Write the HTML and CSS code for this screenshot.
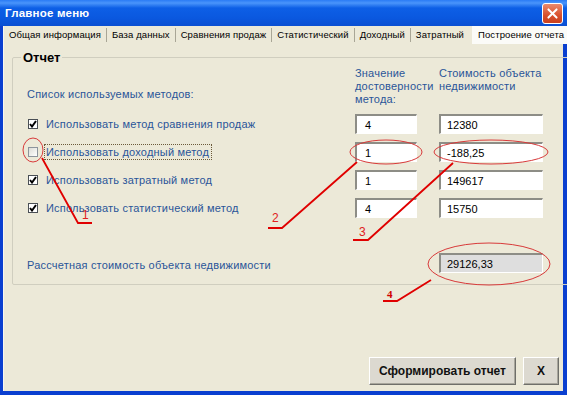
FILE: index.html
```html
<!DOCTYPE html>
<html lang="ru">
<head>
  <meta charset="UTF-8">
  <title>Главное меню</title>
  <link rel="stylesheet" href="styles.css">
</head>
<body>

<div class="window">
  <div class="titlebar">
    <span class="title">Главное меню</span>
    <span class="close">
      <svg width="21" height="21" viewBox="0 0 21 21">
        <path d="M6 6 L15 15 M15 6 L6 15" stroke="#fff" stroke-width="2.2" stroke-linecap="round"/>
      </svg>
    </span>
  </div>

  <div class="client">
    <div class="tabs">
      <span class="tab">Общая информация</span>
      <span class="tab">База данных</span>
      <span class="tab">Сравнения продаж</span>
      <span class="tab">Статистический</span>
      <span class="tab">Доходный</span>
      <span class="tab last">Затратный</span>
      <span class="tab active">Построение отчета</span>
    </div>

    <div class="panel">
      <fieldset class="report">
        <legend>Отчет</legend>
        <div class="grid">
          <div class="list-title">Список используемых методов:</div>
          <div class="head">Значение<br>достоверности<br>метода:</div>
          <div class="head">Стоимость объекта<br>недвижимости</div>

          <label class="method"><span class="cb checked"></span><span>Использовать метод сравнения продаж</span></label>
          <div class="field small">4</div>
          <div class="field">12380</div>

          <label class="method"><span class="cb"></span><span class="focus">Использовать доходный метод</span></label>
          <div class="field small">1</div>
          <div class="field">-188,25</div>

          <label class="method"><span class="cb checked"></span><span>Использовать затратный метод</span></label>
          <div class="field small">1</div>
          <div class="field">149617</div>

          <label class="method"><span class="cb checked"></span><span>Использовать статистический метод</span></label>
          <div class="field small">4</div>
          <div class="field">15750</div>

          <div class="total-label total">Рассчетная стоимость объекта недвижимости</div>
          <div class="total"></div>
          <div class="field readonly total">29126,33</div>
        </div>
      </fieldset>

      <div class="actions">
        <button class="btn">Сформировать отчет</button>
        <button class="btn btn-x">X</button>
      </div>
    </div>
  </div>

  <!-- red notes drawn over the form -->
  <svg class="marks" width="567" height="395" viewBox="0 0 567 395">
    <g fill="none" stroke="#d83a3a" stroke-width="1">
      <ellipse cx="33" cy="150" rx="10" ry="12"/>
      <ellipse cx="386" cy="152" rx="36" ry="12"/>
      <ellipse cx="491" cy="152" rx="57" ry="12"/>
      <ellipse cx="489" cy="264" rx="61" ry="21"/>
    </g>
    <g fill="none" stroke="#e00000" stroke-width="1.8">
      <polyline points="42,158 78,223 92,223"/>
      <polyline points="357,162 282,228 268,228"/>
      <polyline points="453,163 368,240 353,240"/>
      <polyline points="431,280 397,301 383,301"/>
    </g>
    <g fill="#e02020" font-family="Liberation Sans, sans-serif" font-size="12">
      <text x="82" y="219">1</text>
      <text x="272" y="222">2</text>
      <text x="359" y="236">3</text>
    </g>
    <text x="387" y="298" fill="#d00000" font-family="Liberation Serif, serif" font-weight="bold" font-size="11">4</text>
  </svg>
</div>

</body>
</html>
```

FILE: styles.css
```css
body {
  margin: 0;
  font-family: "Liberation Sans", Arial, sans-serif;
  font-size: 11px;
  color: #000;
}

.window {
  position: relative;
  width: 567px;
  height: 395px;
  display: flex;
  flex-direction: column;
  overflow: hidden;
  background-color: #0a3fd0;
}

.titlebar {
  height: 26px;
  display: flex;
  align-items: center;
  justify-content: space-between;
  padding: 0 4px 0 5px;
  background: linear-gradient(#2a7bf5 0, #4a95fb 3px, #0d5fe6 8px, #0a58df 18px, #0a4fd2 26px);
}

.title {
  color: #fff;
  font-weight: bold;
  font-size: 11.5px;
  letter-spacing: 0.2px;
}

.close {
  width: 21px;
  height: 21px;
  border: 1px solid #fff;
  border-radius: 3px;
  box-sizing: border-box;
  background: linear-gradient(#e98a6e, #d9502c 60%, #c9401e);
  display: flex;
  align-items: center;
  justify-content: center;
}

.close svg {
  width: 19px;
  height: 19px;
}

.client {
  flex: 1;
  display: flex;
  flex-direction: column;
  margin: 0 4px 4px 3px;
  background-color: #ece9d8;
  box-shadow: inset 1px 0 #f7f6f0;
}

.tabs {
  height: 18px;
  display: flex;
  align-items: center;
  padding-left: 1px;
  font-size: 9.5px;
  letter-spacing: 0.1px;
}

.tab {
  padding: 0 5px;
  line-height: 14px;
  border-right: 1px solid #a9a696;
  white-space: nowrap;
}

.tab.last {
  border-right: none;
}

.tab.active {
  margin-left: 3px;
  align-self: stretch;
  display: flex;
  align-items: center;
  padding: 0 4px 0 6px;
  background-color: #fbfbf8;
  border-right: none;
}

.panel {
  flex: 1;
  display: flex;
  flex-direction: column;
  padding: 1px 0 6px 0;
}

.report {
  width: 542px;
  margin: 5px 0 0 9px;
  padding: 1px 12px 11px 14px;
  border: 1px solid #d0cebf;
  border-radius: 2px;
}

.report legend {
  padding: 0 2px;
  margin-left: -6px;
  font-weight: bold;
  font-size: 13px;
  line-height: 15px;
}

.grid {
  display: grid;
  grid-template-columns: 328px 84px 104px;
  row-gap: 8px;
  color: #2a5599;
  letter-spacing: 0.2px;
}

.head {
  line-height: 13px;
  padding-top: 1px;
  white-space: nowrap;
}

.list-title {
  align-self: end;
  padding-bottom: 5px;
  line-height: 14px;
}

.method {
  display: flex;
  align-items: center;
  gap: 8px;
  padding-left: 1px;
}

.focus {
  outline: 1px dotted #6b5a3a;
  outline-offset: 1px;
  padding-right: 1px;
}

.cb {
  width: 10px;
  height: 10px;
  box-sizing: border-box;
  border: 1px solid #8c949c;
  background: linear-gradient(135deg, #dcdcd6, #fff);
}

.cb.checked {
  border-color: #4a4f55;
  background: #fff url("data:image/svg+xml,%3Csvg xmlns='http://www.w3.org/2000/svg' width='8' height='8'%3E%3Cpath d='M1 4 L3 6.5 L7 1' fill='none' stroke='%23000' stroke-width='2'/%3E%3C/svg%3E") center / 8px 8px no-repeat;
}

.field {
  height: 20px;
  box-sizing: border-box;
  padding-left: 6px;
  display: flex;
  align-items: center;
  color: #000;
  letter-spacing: 0;
  background-color: #fff;
  border-top: 2px solid #8d8d86;
  border-left: 2px solid #8d8d86;
  border-right: 1px solid #fff;
  border-bottom: 1px solid #fff;
}

.field.small {
  width: 62px;
  padding-left: 8px;
}

.field.readonly {
  background-color: #dedede;
}

.total {
  margin-top: 27px;
}

.total-label {
  padding-top: 6px;
}

.actions {
  margin-top: auto;
  display: flex;
  justify-content: flex-end;
  gap: 7px;
  padding-right: 4px;
}

.btn {
  height: 28px;
  padding: 0 9px;
  font-family: "Liberation Sans", Arial, sans-serif;
  font-weight: bold;
  font-size: 12px;
  color: #111;
  background-color: #dcd9d0;
  border: 1px solid;
  border-color: #fff #6f6f6a #6f6f6a #fff;
  box-shadow: inset -1px -1px #a8a69c;
}

.btn-x {
  width: 36px;
}

.marks {
  position: absolute;
  top: 0;
  left: 0;
  pointer-events: none;
}
```
